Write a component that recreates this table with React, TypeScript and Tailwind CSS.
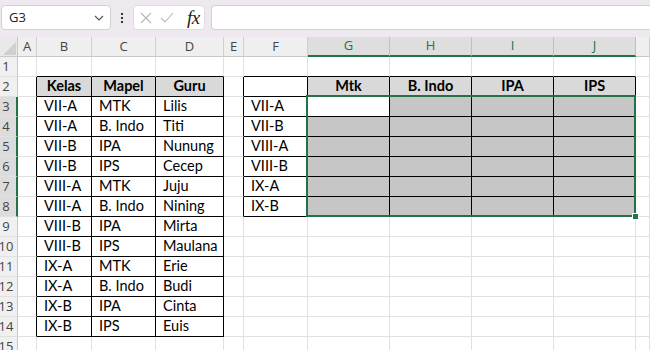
import React from "react";

const colLetters = ["", "A", "B", "C", "D", "E", "F", "G", "H", "I", "J", ""];

const t1: string[][] = [
  ["Kelas", "Mapel", "Guru"],
  ["VII-A", "MTK", "Lilis"],
  ["VII-A", "B. Indo", "Titi"],
  ["VII-B", "IPA", "Nunung"],
  ["VII-B", "IPS", "Cecep"],
  ["VIII-A", "MTK", "Juju"],
  ["VIII-A", "B. Indo", "Nining"],
  ["VIII-B", "IPA", "Mirta"],
  ["VIII-B", "IPS", "Maulana"],
  ["IX-A", "MTK", "Erie"],
  ["IX-A", "B. Indo", "Budi"],
  ["IX-B", "IPA", "Cinta"],
  ["IX-B", "IPS", "Euis"],
];

const t2: string[][] = [
  ["", "Mtk", "B. Indo", "IPA", "IPS"],
  ["VII-A", "", "", "", ""],
  ["VII-B", "", "", "", ""],
  ["VIII-A", "", "", "", ""],
  ["VIII-B", "", "", "", ""],
  ["IX-A", "", "", "", ""],
  ["IX-B", "", "", "", ""],
];

function inT1(r: number, c: number) {
  return r >= 2 && r <= 14 && c >= 3 && c <= 5;
}
function inT2(r: number, c: number) {
  return r >= 2 && r <= 8 && c >= 7 && c <= 11;
}
function inTable(r: number, c: number) {
  return inT1(r, c) || inT2(r, c);
}
function inSel(r: number, c: number) {
  return r >= 3 && r <= 8 && c >= 8 && c <= 11;
}

function cellText(r: number, c: number): string {
  if (inT1(r, c)) return t1[r - 2][c - 3];
  if (inT2(r, c)) return t2[r - 2][c - 7];
  return "";
}

function isHeader(r: number, c: number) {
  return (r === 2 && c >= 3 && c <= 5) || (r === 2 && c >= 8 && c <= 11);
}

function Cell({ r, c }: { r: number; c: number }) {
  const rightBlack = inTable(r, c) || inTable(r, c + 1);
  const bottomBlack = inTable(r, c) || inTable(r + 1, c);
  const header = isHeader(r, c);
  const sel = inSel(r, c) && !(r === 3 && c === 8);
  const cls = [
    "h-[20px] border-r border-b overflow-hidden whitespace-nowrap flex items-end pb-[1px] text-[14.5px] leading-[18px] text-black font-['Lato','Carlito',sans-serif]",
    rightBlack ? "border-r-black" : "border-r-[#e1e1e1]",
    bottomBlack ? "border-b-black" : "border-b-[#e1e1e1]",
    header ? "bg-[#d9d9d9] font-bold justify-center" : sel ? "bg-[#c6c6c6]" : "bg-white pl-[7px]",
  ].join(" ");
  return <div className={cls}>{cellText(r, c)}</div>;
}

function RowHeader({ r }: { r: number }) {
  const selected = r >= 3 && r <= 8;
  return (
    <div
      className={
        selected
          ? "h-[20px] border-b border-b-[#e1e1e1] border-r-2 border-r-[#217346] bg-[#dcdcdc] flex items-center overflow-visible"
          : "h-[20px] border-b border-b-[#e1e1e1] border-r border-r-[#c8c8c8] bg-[#f0f0f0] flex items-center overflow-visible"
      }
    >
      <span className="-ml-[6px] w-[24px] shrink-0 text-center text-[13px] text-[#444] font-['Open_Sans',sans-serif] leading-none">
        {r}
      </span>
    </div>
  );
}

function ColHeader({ c }: { c: number }) {
  const selected = c >= 8 && c <= 11;
  if (c === 1) {
    return (
      <div className="h-[20px] border-r border-r-[#c8c8c8] border-b border-b-[#c8c8c8] bg-[#e9e9e9] relative">
        <svg className="absolute right-[1px] bottom-[1px]" width="13" height="13" viewBox="0 0 13 13">
          <polygon points="13,0 13,13 0,13" fill="#cfcfcf" />
        </svg>
      </div>
    );
  }
  return (
    <div
      className={
        selected
          ? "h-[20px] border-r border-r-[#c0c0c0] border-b-2 border-b-[#217346] bg-[#dedede] flex items-center justify-center text-[13px] text-[#217346] font-['Open_Sans',sans-serif]"
          : "h-[20px] border-r border-r-[#d0d0d0] border-b border-b-[#c8c8c8] bg-[#efefef] flex items-center justify-center text-[13px] text-[#444] font-['Open_Sans',sans-serif]"
      }
    >
      {colLetters[c - 1]}
    </div>
  );
}

export default function App() {
  const rows = Array.from({ length: 15 }, (_, i) => i + 1);
  const cols = Array.from({ length: 11 }, (_, i) => i + 2);
  return (
    <div className="w-[650px] h-[350px] overflow-hidden bg-white font-['Open_Sans',sans-serif]">
      <div className="h-[37px] bg-[#eee9ef] flex items-start pt-[5px] pl-[1px]">
        <div className="w-[110px] h-[25px] bg-white border border-[#d4d0d6] rounded-[4px] flex items-center pl-[7px] pr-[5px]">
          <span className="text-[13px] text-[#222] flex-1">G3</span>
          <svg width="12" height="12" viewBox="0 0 12 12">
            <path d="M2 4 L6 8 L10 4" fill="none" stroke="#555" strokeWidth="1.2" />
          </svg>
        </div>
        <div className="w-[22px] h-[25px] flex flex-col items-center justify-center gap-[2px]">
          <div className="w-[2px] h-[2px] bg-[#333]" />
          <div className="w-[2px] h-[2px] bg-[#333]" />
          <div className="w-[2px] h-[2px] bg-[#333]" />
        </div>
        <div className="w-[72px] h-[25px] bg-white border border-[#e0dce2] rounded-[4px] flex items-center pl-[6px] gap-[8px]">
          <svg width="12" height="12" viewBox="0 0 12 12">
            <path d="M1 1 L11 11 M11 1 L1 11" stroke="#b8b8b8" strokeWidth="1.1" fill="none" />
          </svg>
          <svg width="14" height="12" viewBox="0 0 14 12">
            <path d="M1 6 L5 10 L13 1" stroke="#b8b8b8" strokeWidth="1.1" fill="none" />
          </svg>
          <span className="ml-[5px] text-[19px] italic text-[#222] font-['Liberation_Serif',serif] leading-none tracking-[-0.5px]">fx</span>
        </div>
        <div className="ml-[6px] flex-1 h-[25px] bg-white border border-[#d4d0d6] rounded-l-[4px] border-r-0" />
      </div>

      <div className="relative grid grid-cols-[18px_19px_55px_64px_68px_20px_64px_82px_82px_82px_82px_1fr] grid-rows-[20px_repeat(15,20px)]">
        <ColHeader c={1} />
        {cols.map((c) => (
          <ColHeader key={"h" + c} c={c} />
        ))}
        {rows.map((r) => (
          <React.Fragment key={r}>
            <RowHeader r={r} />
            {cols.map((c) => (
              <Cell key={r + "-" + c} r={r} c={c} />
            ))}
          </React.Fragment>
        ))}
        <div className="absolute col-start-8 col-end-12 row-start-4 row-end-10 -left-[2px] -top-[2px] right-0 bottom-0 border-2 border-[#217346] pointer-events-none">
          <div className="absolute -right-[5px] -bottom-[5px] w-[7px] h-[7px] bg-[#217346] border border-white" />
        </div>
      </div>
    </div>
  );
}
